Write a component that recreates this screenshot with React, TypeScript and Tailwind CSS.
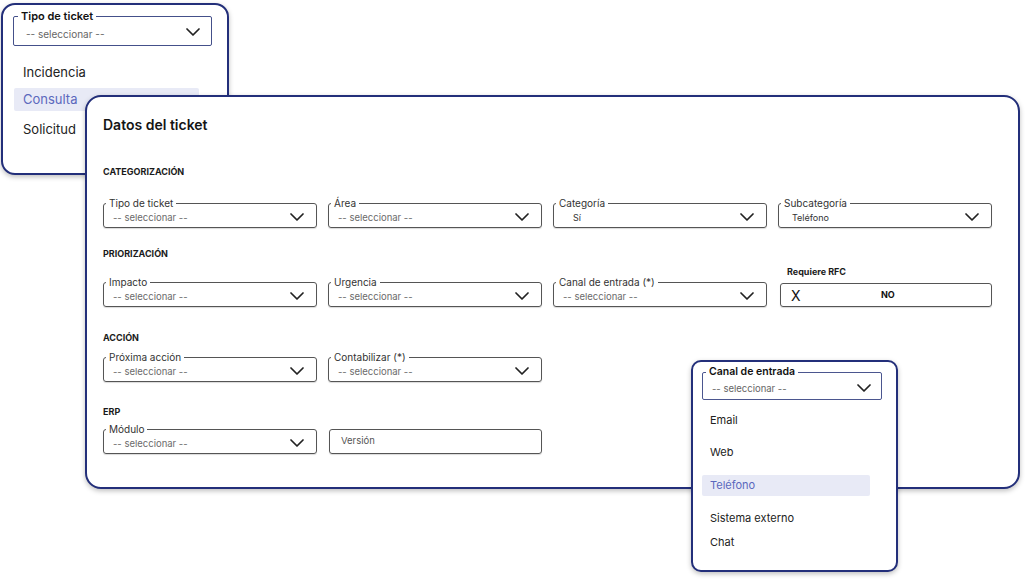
import React from "react";

const Chevron = ({ className = "" }: { className?: string }) => (
  <svg width="14" height="8" viewBox="0 0 14 8" className={className} fill="none">
    <polyline points="1,1 7,7 13,1" stroke="#222" strokeWidth="1.7" strokeLinecap="round" strokeLinejoin="round" />
  </svg>
);

function Field({
  label,
  value,
  isValue = false,
  indent = "pl-[9px]",
}: {
  label: string;
  value: string;
  isValue?: boolean;
  indent?: string;
}) {
  return (
    <fieldset className="border border-[#555] rounded-[3px] px-0 m-0 shadow-[0_1px_1px_rgba(0,0,0,0.15)]">
      <legend className="ml-[2px] px-[3px] text-[10px] leading-[12px] text-[#333]">{label}</legend>
      <div className={`flex items-center justify-between h-[18px] pr-[12px] ${indent}`}>
        <span className={isValue ? "text-[9px] text-[#333]" : "text-[9.5px] text-[#6b6b6b]"}>{value}</span>
        <Chevron className="-mt-[3px]" />
      </div>
    </fieldset>
  );
}

function SectionTitle({ children, className = "" }: { children: React.ReactNode; className?: string }) {
  return <div className={`text-[9px] leading-[12px] font-bold text-[#1a1a1a] ${className}`}>{children}</div>;
}

export default function App() {
  return (
    <div
      className="relative w-[1034px] h-[585px] bg-white overflow-hidden"
      style={{ fontFamily: "Inter, 'Noto Sans', sans-serif" }}
    >
      {/* Top-left dropdown window */}
      <div className="absolute left-[1px] top-[3px] w-[228px] h-[172px] border-2 border-[#232f7a] rounded-[14px] bg-white shadow-[0_2px_5px_rgba(0,0,0,0.25)] pl-[10px] pt-[4px]">
        <fieldset className="w-[199px] border border-[#44508a] rounded-[2px] px-0 m-0">
          <legend className="ml-[4px] px-[3px] text-[11px] leading-[14px] font-semibold text-[#111]">Tipo de ticket</legend>
          <div className="flex items-center justify-between h-[22px] pl-[12px] pr-[11px]">
            <span className="text-[10px] text-[#666]">-- seleccionar --</span>
            <Chevron className="-mt-[4px]" />
          </div>
        </fieldset>
        <div className="ml-[1px] w-[185px] mt-[15px]">
          <div className="h-[23px] flex items-center pl-[9px] text-[13px] text-[#222]">Incidencia</div>
          <div className="h-[23px] mt-[4px] flex items-center pl-[9px] text-[13px] text-[#5b68bd] bg-[#e8eaf6] rounded-[2px]">
            Consulta
          </div>
          <div className="h-[23px] mt-[7px] flex items-center pl-[9px] text-[13px] text-[#222]">Solicitud</div>
        </div>
      </div>

      {/* Main card */}
      <div className="absolute left-[85px] top-[95px] w-[935px] h-[394px] border-2 border-[#232f7a] rounded-[16px] bg-white shadow-[0_2px_5px_rgba(0,0,0,0.25)] pl-[16px] pt-[18px]">
        <div className="text-[14px] leading-[20px] font-semibold text-[#151515]">Datos del ticket</div>

        <SectionTitle className="mt-[31px]">CATEGORIZACIÓN</SectionTitle>
        <div className="mt-[19px] grid grid-cols-[214px_214px_214px_214px] gap-x-[11px]">
          <Field label="Tipo de ticket" value="-- seleccionar --" />
          <Field label="Área" value="-- seleccionar --" />
          <Field label="Categoría" value="Sí" isValue indent="pl-[19px]" />
          <Field label="Subcategoría" value="Teléfono" isValue indent="pl-[13px]" />
        </div>

        <SectionTitle className="mt-[20px]">PRIORIZACIÓN</SectionTitle>
        <div className="mt-[6px] grid grid-cols-[214px_214px_214px_214px] gap-x-[11px] items-end">
          <Field label="Impacto" value="-- seleccionar --" />
          <Field label="Urgencia" value="-- seleccionar --" />
          <Field label="Canal de entrada (*)" value="-- seleccionar --" />
          <div className="ml-[2px]">
            <div className="text-[9px] leading-[12px] font-bold text-[#1a1a1a] pl-[7px]">Requiere RFC</div>
            <div className="mt-[5px] h-[24px] border border-[#555] rounded-[3px] flex items-center pl-[10px] shadow-[0_1px_1px_rgba(0,0,0,0.15)]">
              <span className="text-[14px] text-[#111] w-[90px]">X</span>
              <span className="text-[9px] font-bold text-[#111]">NO</span>
            </div>
          </div>
        </div>

        <SectionTitle className="mt-[25px]">ACCIÓN</SectionTitle>
        <div className="mt-[7px] grid grid-cols-[214px_214px_214px_214px] gap-x-[11px]">
          <Field label="Próxima acción" value="-- seleccionar --" />
          <Field label="Contabilizar (*)" value="-- seleccionar --" />
        </div>

        <SectionTitle className="mt-[24px]">ERP</SectionTitle>
        <div className="mt-[5px] grid grid-cols-[214px_214px_214px_214px] gap-x-[11px] items-end">
          <Field label="Módulo" value="-- seleccionar --" />
          <div className="ml-[1px] h-[25px] border border-[#555] rounded-[3px] flex items-center pl-[11px] shadow-[0_1px_1px_rgba(0,0,0,0.15)]">
            <span className="text-[9.5px] text-[#555]">Versión</span>
          </div>
        </div>
      </div>

      {/* Right dropdown window */}
      <div className="absolute left-[691px] top-[360px] w-[207px] h-[212px] border-2 border-[#232f7a] rounded-[10px] bg-white shadow-[0_2px_5px_rgba(0,0,0,0.25)] pl-[9px] pt-[3px]">
        <fieldset className="w-[180px] border border-[#4b568f] rounded-[2px] px-0 m-0">
          <legend className="ml-[3px] px-[3px] text-[10.5px] leading-[14px] font-semibold text-[#111]">Canal de entrada</legend>
          <div className="flex items-center justify-between h-[20px] pl-[9px] pr-[10px]">
            <span className="text-[9.5px] text-[#666]">-- seleccionar --</span>
            <Chevron className="-mt-[3px]" />
          </div>
        </fieldset>
        <div className="w-[168px] mt-[10px]">
          <div className="h-[21px] flex items-center pl-[8px] text-[11px] text-[#222]">Email</div>
          <div className="h-[21px] mt-[11px] flex items-center pl-[8px] text-[11px] text-[#222]">Web</div>
          <div className="h-[21px] mt-[12px] flex items-center pl-[8px] text-[11px] text-[#5b68bd] bg-[#e8eaf6] rounded-[2px]">
            Teléfono
          </div>
          <div className="h-[21px] mt-[12px] flex items-center pl-[8px] text-[11px] text-[#222]">Sistema externo</div>
          <div className="h-[21px] mt-[3px] flex items-center pl-[8px] text-[11px] text-[#222]">Chat</div>
        </div>
      </div>
    </div>
  );
}
